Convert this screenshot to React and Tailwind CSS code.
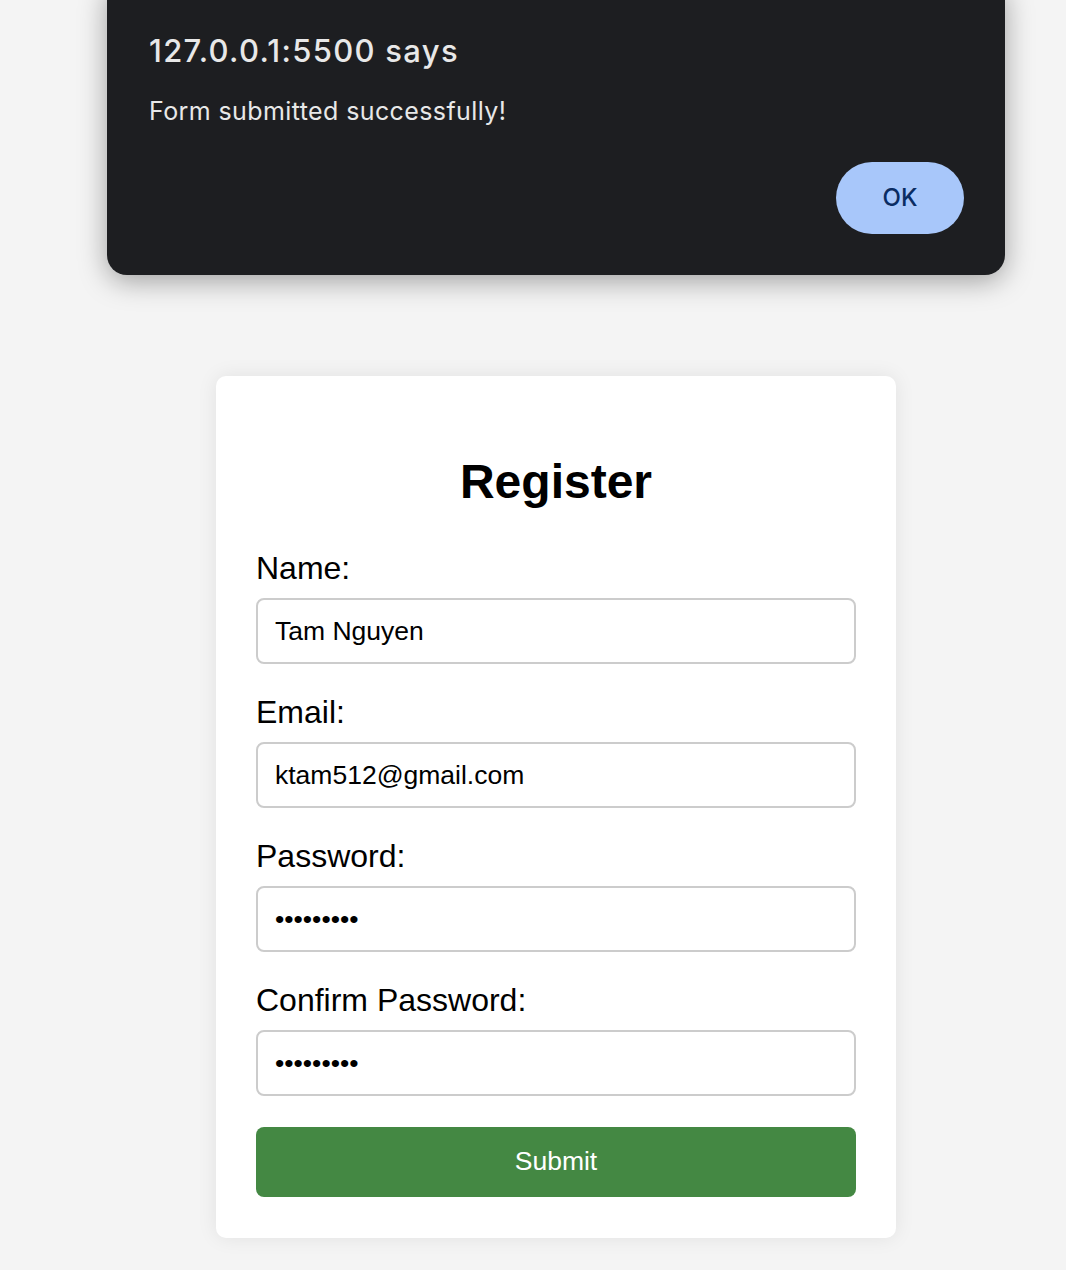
import React from "react";

function Field({ label, type = "text", value, last }) {
  return (
    <div className={last ? "mb-[31px]" : "mb-[28px]"}>
      <label className="block text-[32px] leading-[40px] text-black">{label}</label>
      <input
        type={type}
        value={value}
        readOnly
        className="mt-[10px] block w-full h-[66px] border-2 border-[#cccccc] rounded-[8px] px-[17px] text-[26.5px] text-black bg-white outline-none"
        style={{ fontFamily: '"Liberation Sans", Arial, sans-serif' }}
      />
    </div>
  );
}

export default function App() {
  return (
    <div
      className="relative min-h-[1270px] w-full bg-[#f4f4f4] overflow-hidden"
      style={{ fontFamily: '"Liberation Sans", Arial, sans-serif' }}
    >
      {/* Alert dialog overlay */}
      <div
        className="absolute left-[107px] top-[-20px] w-[898px] bg-[#1d1e21] rounded-[20px] shadow-[0_6px_28px_rgba(0,0,0,0.35)] pl-[42px] pr-[41px] pb-[41px] pt-[53px] flex flex-col"
        style={{ fontFamily: 'Inter, "Noto Sans", sans-serif' }}
      >
        <div className="text-[31px] leading-[36px] font-medium tracking-[1.3px] text-[#e8e8e8]">127.0.0.1:5500 says</div>
        <div className="mt-[27px] text-[25px] leading-[30px] tracking-[0.4px] text-[#e8e8e8]">Form submitted successfully!</div>
        <div className="mt-[36px] flex justify-end">
          <button className="w-[128px] h-[72px] rounded-full bg-[#a8c7fa] text-[#0a2c62] text-[24px] font-medium">
            OK
          </button>
        </div>
      </div>

      {/* Register card */}
      <div className="ml-[216px] pt-[376px] pb-[32px]">
        <div className="w-[680px] bg-white rounded-[10px] shadow-[0_0_20px_rgba(0,0,0,0.08)] px-[40px] pt-[40px] pb-[41px]">
          <h2 className="text-center text-[48px] leading-[54px] font-bold text-black mt-[39px] mb-[39px]">
            Register
          </h2>
          <Field label="Name:" value="Tam Nguyen" />
          <Field label="Email:" type="email" value="ktam512@gmail.com" />
          <Field label="Password:" type="password" value="123456789" />
          <Field label="Confirm Password:" type="password" value="123456789" last />
          <button className="block w-full h-[70px] rounded-[8px] bg-[#448843] text-white text-[26.5px]">
            Submit
          </button>
        </div>
      </div>
    </div>
  );
}
